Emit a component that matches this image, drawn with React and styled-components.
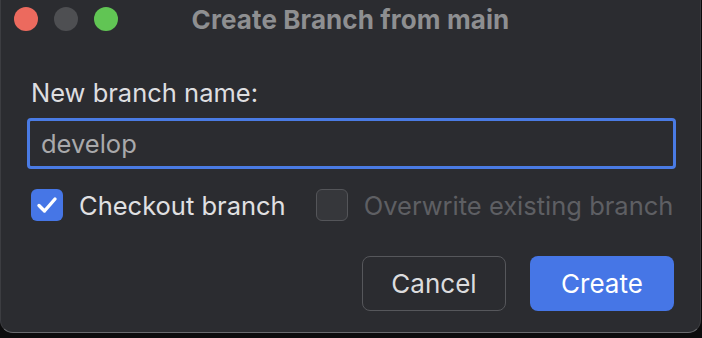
import styled, { createGlobalStyle } from "styled-components";

const GlobalStyle = createGlobalStyle`
  html, body {
    margin: 0;
    padding: 0;
    background: #0c0c0d;
    font-family: Inter, "Liberation Sans", sans-serif;
  }
`;

const Window = styled.div`
  width: 701px;
  height: 333px;
  box-sizing: border-box;
  background: #2b2c30;
  border-radius: 0 0 13px 13px;
  border: 1px solid #3c3d41;
  border-bottom: 1.5px solid #6a6b6f;
  border-top: none;
  display: flex;
  flex-direction: column;
  overflow: hidden;
`;

const TitleBar = styled.div`
  height: 38px;
  flex-shrink: 0;
  display: grid;
  grid-template-columns: 1fr auto 1fr;
  align-items: center;
`;

const Lights = styled.div`
  display: flex;
  gap: 16px;
  padding-left: 13px;
`;

const Light = styled.span`
  width: 24px;
  height: 24px;
  border-radius: 50%;
  background: ${(p) => p.$color};
`;

const Title = styled.div`
  font-size: 26px;
  font-weight: 700;
  color: #8e8f91;
  letter-spacing: 0.1px;
  white-space: nowrap;
`;

const Content = styled.div`
  padding: 40px 24px 0 26px;
  display: flex;
  flex-direction: column;
`;

const Label = styled.div`
  font-size: 25.5px;
  color: #dedee0;
  padding-left: 4px;
  line-height: 30px;
`;

const Input = styled.div`
  margin-top: 10px;
  height: 51px;
  flex-shrink: 0;
  box-sizing: border-box;
  border: 3px solid #4a7be4;
  border-radius: 4px;
  display: flex;
  align-items: center;
  padding-left: 11px;
  font-size: 25.5px;
  color: #a9a9ab;
`;

const Options = styled.div`
  margin-top: 20px;
  display: flex;
  align-items: center;
  padding-left: 4px;
`;

const Option = styled.div`
  display: flex;
  align-items: center;
  flex-shrink: 0;
  gap: 16px;
  margin-right: 30px;
  font-size: 25.5px;
  white-space: nowrap;
  color: ${(p) => (p.$disabled ? "#5e5f63" : "#e0e0e2")};
`;

const Box = styled.span`
  width: 32px;
  height: 32px;
  flex-shrink: 0;
  box-sizing: border-box;
  border-radius: 6px;
  display: flex;
  align-items: center;
  justify-content: center;
  background: ${(p) => (p.$checked ? "#4676e6" : "#36373b")};
  border: ${(p) => (p.$checked ? "none" : "1.5px solid #545559")};
`;

const Actions = styled.div`
  margin-top: 35px;
  display: flex;
  justify-content: flex-end;
  gap: 24px;
  padding-right: 2px;
`;

const Button = styled.button`
  width: 144px;
  height: 55px;
  box-sizing: border-box;
  border-radius: 8px;
  font-family: inherit;
  font-size: 26px;
  color: ${(p) => (p.$primary ? "#ffffff" : "#dcdcde")};
  background: ${(p) => (p.$primary ? "#4676e6" : "transparent")};
  border: ${(p) => (p.$primary ? "none" : "1.5px solid #56575b")};
`;

function Check() {
  return (
    <svg width="22" height="22" viewBox="0 0 22 22">
      <polyline
        points="3,11.5 8.5,17 19,5"
        fill="none"
        stroke="#fff"
        strokeWidth="3.4"
        strokeLinecap="round"
        strokeLinejoin="round"
      />
    </svg>
  );
}

export default function App() {
  return (
    <>
      <GlobalStyle />
      <Window>
        <TitleBar>
          <Lights>
            <Light $color="#ec6a5e" />
            <Light $color="#4e4f52" />
            <Light $color="#61c554" />
          </Lights>
          <Title>Create Branch from main</Title>
          <div />
        </TitleBar>
        <Content>
          <Label>New branch name:</Label>
          <Input>develop</Input>
          <Options>
            <Option>
              <Box $checked>
                <Check />
              </Box>
              Checkout branch
            </Option>
            <Option $disabled>
              <Box />
              Overwrite existing branch
            </Option>
          </Options>
          <Actions>
            <Button>Cancel</Button>
            <Button $primary>Create</Button>
          </Actions>
        </Content>
      </Window>
    </>
  );
}
